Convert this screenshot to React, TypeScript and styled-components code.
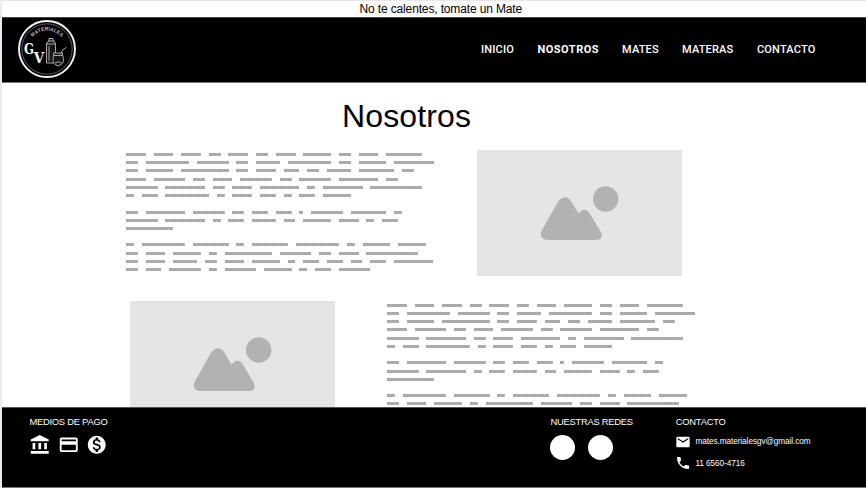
import React from 'react';
import styled, { createGlobalStyle } from 'styled-components';
import { MdAccountBalance, MdCreditCard, MdMonetizationOn, MdEmail, MdPhone } from 'react-icons/md';

const GlobalStyle = createGlobalStyle`
  * { box-sizing: border-box; }
  body {
    margin: 0;
    background: #fff;
    font-family: "Liberation Sans", Arial, sans-serif;
    overflow: hidden;
  }
`;

const Page = styled.div`
  display: flex;
  flex-direction: column;
  height: 488px;
  border-left: 2px solid #e9edf3;
  border-top: 1px solid #e4e8ee;
  overflow: hidden;
`;

const Announcement = styled.div`
  height: 16px;
  flex: none;
  padding-left: 357.5px;
  font-size: 12px;
  line-height: 16px;
  letter-spacing: -0.14px;
  color: #000;
  white-space: nowrap;
`;

const Header = styled.header`
  display: flex;
  align-items: center;
  justify-content: space-between;
  flex: none;
  height: 66px;
  padding: 0 49px 0 15px;
  background: #000;
  border-top: 1px solid #444;
  border-bottom: 1px solid #777;
`;

const LogoSvg = styled.svg`
  display: block;
  width: 60px;
  height: 60px;
  margin-top: -2px;
`;

const Nav = styled.nav`
  display: flex;
  gap: 23px;
`;

const NavLink = styled.a<{ $active?: boolean; $width: number }>`
  width: ${(p) => p.$width}px;
  font-family: Roboto, sans-serif;
  font-size: 11px;
  line-height: 14px;
  font-weight: ${(p) => (p.$active ? 700 : 500)};
  letter-spacing: ${(p) => (p.$active ? 0.5 : 0.18)}px;
  color: #fff;
  white-space: nowrap;
`;

const Main = styled.main`
  flex: none;
  height: 324px;
  overflow: hidden;
`;

const Title = styled.h1`
  margin: 14px 0 0 340px;
  height: 53px;
  font-size: 32px;
  line-height: 38px;
  font-weight: 400;
  letter-spacing: 0.12px;
  color: #000;
`;

const Section = styled.section<{ $left: number; $gap: number }>`
  display: flex;
  align-items: flex-start;
  gap: ${(p) => p.$gap}px;
  height: 151px;
  padding-left: ${(p) => p.$left}px;
`;

const Copy = styled.div<{ $top: number }>`
  width: 308px;
  flex: none;
  padding-top: ${(p) => p.$top}px;
`;

const TextLine = styled.div`
  display: flex;
  gap: 7.89px;
  height: 8.22px;
`;

const Word = styled.span<{ $chars: number }>`
  flex: none;
  width: ${(p) => p.$chars * 3.945}px;
  height: 3px;
  background: repeating-linear-gradient(90deg, #a8a8a8 0 3px, #b4b4b4 3px 3.945px);
`;

const PictureSvg = styled.svg`
  display: block;
  flex: none;
  width: 205px;
  height: 126px;
`;

const Footer = styled.footer`
  display: flex;
  flex: none;
  height: 81px;
  padding: 8px 0 0 27px;
  background: #000;
  color: #fff;
  border-top: 1px solid #555;
  border-bottom: 1px solid #777;
`;

const FooterColumn = styled.div<{ $width: number }>`
  width: ${(p) => p.$width}px;
  flex: none;
`;

const FooterTitle = styled.h2<{ $spacing: number }>`
  margin: 0;
  padding-left: 0.4px;
  font-size: 9.4px;
  line-height: 12px;
  font-weight: 400;
  letter-spacing: ${(p) => p.$spacing}px;
  white-space: nowrap;
`;

const PaymentIcons = styled.div`
  display: flex;
  gap: 7px;
  margin-top: 6px;
  svg { width: 21.5px; height: 21.5px; }
`;

const Socials = styled.div`
  display: flex;
  gap: 13px;
  margin-top: 7px;
`;

const SocialDot = styled.span`
  width: 25px;
  height: 25px;
  border-radius: 50%;
  background: #fff;
`;

const ContactRow = styled.div<{ $top: number }>`
  display: flex;
  align-items: center;
  gap: 4px;
  height: 16px;
  margin-top: ${(p) => p.$top}px;
  font-size: 8.2px;
  letter-spacing: -0.05px;
  white-space: nowrap;
  svg { width: 16px; height: 16px; }
`;

const paragraphs: number[][] = [
  [5, 5, 5, 3, 5, 3, 5, 7, 3, 5, 9],
  [3, 11, 8, 3, 6, 11, 3, 7, 10],
  [3, 7, 12, 3, 5, 4, 3, 6, 9, 3],
  [5, 8, 3, 5, 8, 3, 8, 10, 3],
  [8, 10, 3, 5, 10, 2, 10, 13],
  [2, 4, 11, 2, 5, 4, 2, 4, 7],
  [],
  [3, 10, 8, 3, 4, 4, 1, 8, 9, 2],
  [8, 10, 2, 4, 6, 3, 7, 5, 2, 4],
  [12],
  [],
  [2, 11, 9, 2, 9, 11, 2, 7, 7],
  [3, 5, 7, 2, 12, 8, 3, 5, 13],
  [3, 5, 6, 3, 5, 7, 2, 4, 4, 3, 4, 10],
  [3, 4, 8, 2, 8, 7, 2, 4, 8],
];

function PlaceholderText({ top }: { top: number }) {
  return (
    <Copy $top={top}>
      {paragraphs.map((words, i) => (
        <TextLine key={i}>
          {words.map((n, j) => (
            <Word key={j} $chars={n} />
          ))}
        </TextLine>
      ))}
    </Copy>
  );
}

function Picture() {
  return (
    <PictureSvg viewBox="0 0 205 126">
      <rect width="205" height="126" fill="#e5e5e5" />
      <circle cx="128.7" cy="49" r="12.7" fill="#b2b2b2" />
      <path
        fill="#b2b2b2"
        d="M71 90 C65 90 62 85.5 65 80 L80 53.5 C84 45.5 91 45.5 95 52.5 L101.5 63.5 C105 58.5 109.5 58.5 112.5 63 L123.5 81.5 C126.5 86.5 124 90 119 90 Z"
      />
    </PictureSvg>
  );
}

function Logo() {
  return (
    <LogoSvg viewBox="0 0 60 60">
      <defs>
        <path id="logo-arc" d="M12 24.5 A19 19 0 0 1 48 24.5" />
      </defs>
      <circle cx="30" cy="30" r="28" fill="none" stroke="#f2f2f2" strokeWidth="1.9" />
      <circle cx="30" cy="30" r="25.2" fill="none" stroke="#999" strokeWidth=".6" />
      <text fontFamily="Liberation Sans, sans-serif" fontSize="5" fontWeight="700" fill="#b8b8b8" textAnchor="middle">
        <textPath href="#logo-arc" startOffset="50%">MATERIALES</textPath>
      </text>
      <g fontFamily="DejaVu Serif, serif" fontWeight="700" fill="#f4f4f4">
        <text x="7" y="34.5" fontSize="14.5" textLength="10" lengthAdjust="spacingAndGlyphs">G</text>
        <text x="16.8" y="43.5" fontSize="15" textLength="10.5" lengthAdjust="spacingAndGlyphs">V</text>
      </g>
      <g fill="#161616" stroke="#b8b8b8" strokeWidth=".9">
        <path d="M29.5 44 V25 Q30 22.5 32 22 V19.5 H36 V22 Q38 22.5 38.5 25 V44 Z" />
        <path d="M31 22 H37.5 M29.5 25 H38.5 M32 27 V42" fill="none" />
        <path d="M37 36 H45.5 C47.5 40.5 46.5 44.5 44 45.5 L41 47 L38 45.5 C35.5 43.5 35.5 40 37 36 Z" />
        <path d="M36.5 34 H45.5 V36.5 H36.5 Z M38 44 Q41 41.5 44.5 44" />
        <path d="M43.5 35 L46 30.5 L49.5 28.5" fill="none" />
      </g>
    </LogoSvg>
  );
}

export default function App() {
  return (
    <>
      <GlobalStyle />
      <Page>
        <Announcement>No te calentes, tomate un Mate</Announcement>
        <Header>
          <Logo />
          <Nav>
            <NavLink $width={33.5}>INICIO</NavLink>
            <NavLink $width={61.5} $active>NOSOTROS</NavLink>
            <NavLink $width={37}>MATES</NavLink>
            <NavLink $width={52}>MATERAS</NavLink>
            <NavLink $width={60}>CONTACTO</NavLink>
          </Nav>
        </Header>
        <Main>
          <Title>Nosotros</Title>
          <Section $left={124} $gap={43}>
            <PlaceholderText top={3} />
            <Picture />
          </Section>
          <Section $left={128.3} $gap={51.7}>
            <Picture />
            <PlaceholderText top={2.8} />
          </Section>
        </Main>
        <Footer>
          <FooterColumn $width={521}>
            <FooterTitle $spacing={-0.25}>MEDIOS DE PAGO</FooterTitle>
            <PaymentIcons>
              <MdAccountBalance />
              <MdCreditCard />
              <MdMonetizationOn />
            </PaymentIcons>
          </FooterColumn>
          <FooterColumn $width={125.4}>
            <FooterTitle $spacing={-0.25}>NUESTRAS REDES</FooterTitle>
            <Socials>
              <SocialDot />
              <SocialDot />
            </Socials>
          </FooterColumn>
          <FooterColumn $width={160}>
            <FooterTitle $spacing={-0.25}>CONTACTO</FooterTitle>
            <ContactRow $top={5.5}>
              <MdEmail />
              <span>mates.materialesgv@gmail.com</span>
            </ContactRow>
            <ContactRow $top={5.5}>
              <MdPhone />
              <span>11 6560-4716</span>
            </ContactRow>
          </FooterColumn>
        </Footer>
      </Page>
    </>
  );
}
